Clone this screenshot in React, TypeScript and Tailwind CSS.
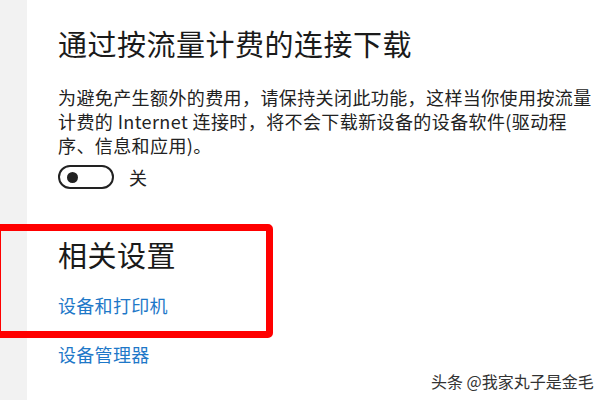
import React from "react";

export default function App() {
  const cjk = { fontFamily: '"Noto Sans CJK SC", "Noto Sans", sans-serif' };
  return (
    <div className="relative w-[600px] h-[400px] bg-white flex overflow-hidden" style={cjk}>
      <div className="w-[27px] shrink-0 bg-[#f2f2f2]" />
      <div className="flex flex-col pl-[31px] pt-[25px] text-[#1a1a1a]">
        <h1 className="text-[29px] leading-[36px] font-normal tracking-[0.5px] whitespace-nowrap">通过按流量计费的连接下载</h1>
        <p className="mt-[24px] text-[18px] leading-[24px] text-[#222] tracking-[0.4px] whitespace-nowrap">
          <span className="block">为避免产生额外的费用，请保持关闭此功能，这样当你使用按流量</span>
          <span className="block">计费的 Internet 连接时，将不会下载新设备的设备软件(驱动程</span>
          <span className="block">序、信息和应用)。</span>
        </p>
        <div className="mt-[8px] flex items-center gap-[15px]">
          <div className="w-[56px] h-[24px] rounded-full border-2 border-[#222] flex items-center pl-[7px]">
            <div className="w-[11px] h-[11px] rounded-full bg-[#222]" />
          </div>
          <span className="text-[18px] leading-[24px] text-[#222]">关</span>
        </div>
        <h2 className="mt-[47px] text-[29px] leading-[36px] font-normal tracking-[0.5px]">相关设置</h2>
        <a className="mt-[21px] text-[18px] leading-[24px] text-[#1e78c8] tracking-[0.3px]">设备和打印机</a>
        <a className="mt-[25px] text-[18px] leading-[24px] text-[#1e78c8] tracking-[0.3px]">设备管理器</a>
      </div>
      <div className="absolute left-[-6px] top-[224px] w-[279px] h-[114px] border-[7px] border-[#ff0000] rounded-[5px]" />
      <div
        className="absolute left-[431px] top-[370px] text-[16px] leading-[22px] text-[#333]"
        style={{ textShadow: "0 0 2px #fff, 0 0 2px #fff" }}
      >
        头条 @我家丸子是金毛
      </div>
    </div>
  );
}
